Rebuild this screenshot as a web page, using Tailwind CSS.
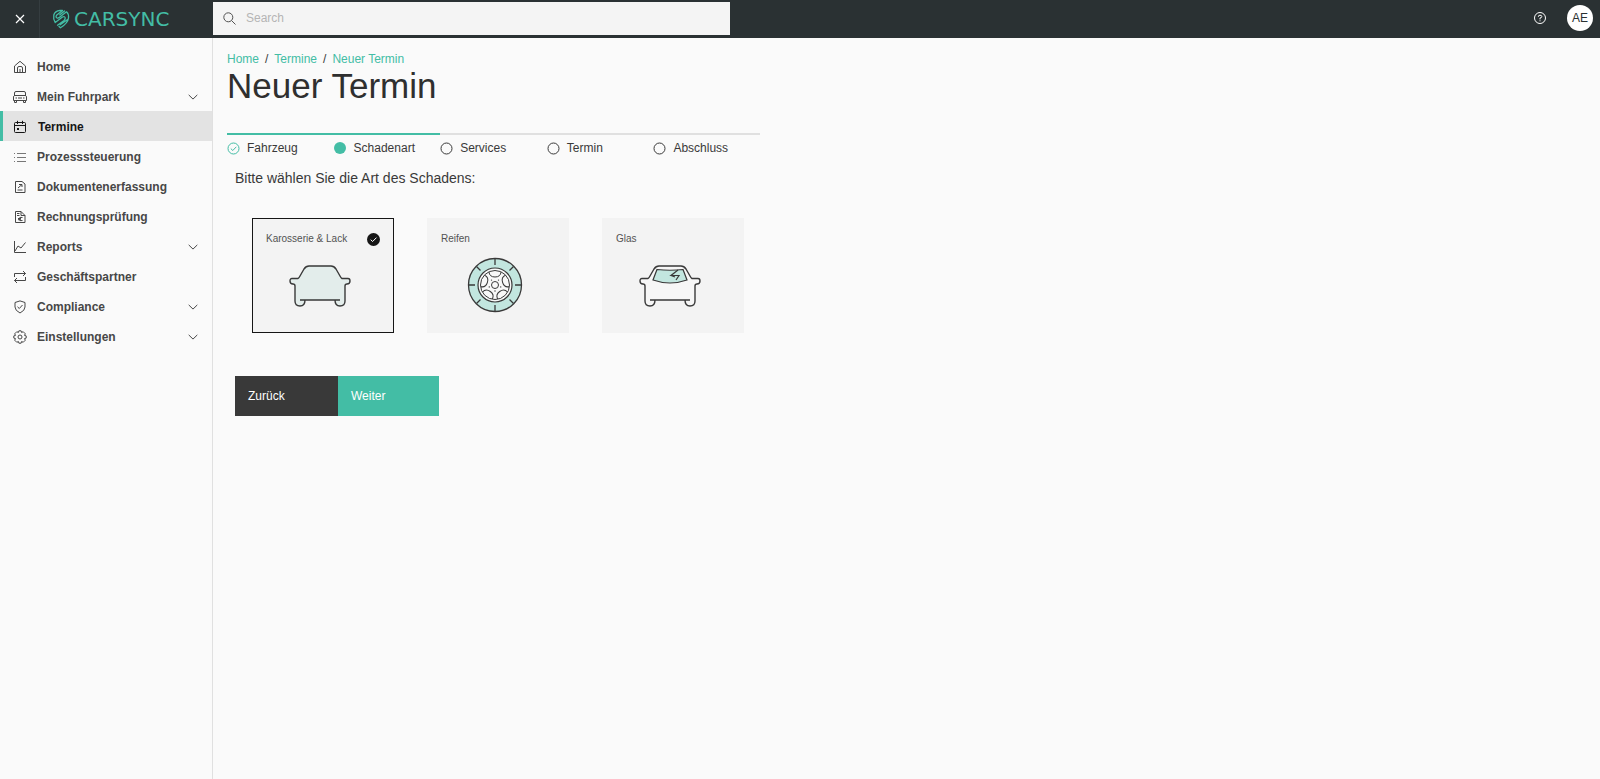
<!DOCTYPE html>
<html lang="de">
<head>
<meta charset="utf-8">
<title>Neuer Termin</title>
<script src="https://cdn.jsdelivr.net/npm/@tailwindcss/browser@4"></script>
</head>
<body class="min-h-screen flex flex-col bg-[#fafafa] font-['Liberation_Sans',Arial,sans-serif] text-xs text-[#393939]">
<svg class="hidden" aria-hidden="true">
  <symbol id="chevron" viewBox="0 0 10 6"><path d="M.7.9 5 5.1 9.300.9" fill="none" stroke="currentColor"/></symbol>
  <symbol id="car" viewBox="0 0 62 42">
    <path d="M9 14 15 4Q17 1 20 1H42Q45 1 47 4L53 14H58Q61 14 61 17Q61 19 58 19L56 20V37Q56 41 51 41Q46 41 46 36V35H16V36Q16 41 11 41Q6 41 6 37V20L4 19Q1 19 1 17Q1 14 4 14Z" stroke="none"/>
    <path d="M9 13.500Q10 13 11 11L15 4Q17 1 20 1H42Q45 1 47 4L51 11Q52 13 53 13.500H59Q61 13.500 61 16Q61 19 58 19Q56 19 56 21V36Q56 41 51 41Q46 41 46 35M9 13.500H3Q1 13.500 1 16Q1 19 4 19Q6 19 6 21V36Q6 41 11 41Q16 41 16 35M11 35H51" fill="none" stroke="#393939" stroke-width="1.400"/>
  </symbol>
</svg>
<header class="flex h-[38px] items-center bg-[#2a3133] text-white">
  <button type="button" aria-label="Menü schließen" class="flex h-full w-10 items-center justify-center border-r border-[#353d40]">
    <svg class="size-3" viewBox="0 0 12 12" fill="none" stroke="currentColor" stroke-width="1.200"><path d="M2 2l8 8M10 2l-8 8"/></svg>
  </button>
  <a href="#" class="flex w-[173px] items-center gap-1 pl-3 text-[#43bda5]">
    <svg class="h-[20px] w-[18px] shrink-0" viewBox="0 0 18 20" fill="none" stroke="currentColor" stroke-width="1.300" stroke-linecap="round" stroke-linejoin="round"><path d="M3.200 13.500Q1 10 1.800 6Q3 1.800 8 1.500L10.500 1.500L4.800 6Q3.200 8 5 9Q6 9.500 7.500 8.200L14.500 2.800Q17 5 16.500 9Q16 14 8.500 18.800L7 17.500M3.200 13.500L10.500 8Q13 7 13.200 9Q13.200 10.500 12 11.500L5.500 16.200M8.200 15.800L16 10.200M7.800 5.800L12.500 2"/></svg>
    <span class="font-['DejaVu_Sans',sans-serif] text-xl leading-5">CARSYNC</span>
  </a>
  <label class="flex h-[33px] w-[517px] items-center gap-[10px] bg-[#f4f4f4] pl-[10px] mb-[3px] mt-[1px]">
    <svg class="size-[13px] shrink-0 text-[#525252]" viewBox="0 0 13 13" fill="none" stroke="currentColor"><circle cx="5.300" cy="5.300" r="4.500"/><path d="M8.500 8.500l4 4"/></svg>
    <input type="search" placeholder="Search" aria-label="Search" class="h-full min-w-0 grow bg-transparent text-xs text-[#393939] outline-none placeholder:text-[#b5b5b5]">
  </label>
  <button type="button" aria-label="Hilfe" class="ml-auto mr-5 pb-[2px]">
    <svg class="size-[14px]" viewBox="0 0 14 14" fill="none" stroke="currentColor"><circle cx="7" cy="7" r="5.500"/><path d="M5.300 5.800Q5.300 4.200 7 4.200Q8.800 4.200 8.800 5.600Q8.800 6.800 7 7V8.400M7 9.300V10.300"/></svg>
  </button>
  <button type="button" class="mb-[2px] mr-[7px] size-[26px] rounded-full bg-white text-xs text-[#2a3133]">AE</button>
</header>
<div class="flex grow">
  <nav class="w-[213px] shrink-0 border-r border-[#e0e0e0] pt-[13px] font-bold text-[#474747]">
    <ul>
      <li><a href="#" class="flex h-[30px] items-center gap-[10px] pl-[13px] pt-px"><svg class="size-[14px]" viewBox="0 0 14 14" fill="none" stroke="currentColor"><path d="M1.500 6 7 1.300 12.500 6V12.500H1.500ZM4.500 12.500V8Q4.500 6.500 6 6.500H8Q9.500 6.500 9.500 8V12.500M7 9V12.500"/></svg>Home</a></li>
      <li><a href="#" class="flex h-[30px] items-center gap-[10px] pl-[13px] pr-[14px] pt-px"><svg class="size-[14px]" viewBox="0 0 14 14" fill="none" stroke="currentColor"><path d="M1.500 6V3Q1.500 1.500 3 1.500H11Q12.500 1.500 12.500 3V6M1.500 5.500H12.500Q13.500 6 13.500 7V10.500H.5V7Q.5 6 1.500 5.500ZM1.500 10.500V12.500H3.500V10.500M10.500 10.500V12.500H12.500V10.500M2.500 8H4M10 8H11.500M5 8H9"/></svg>Mein Fuhrpark<svg class="ml-auto h-[6px] w-[10px]"><use href="#chevron"/></svg></a></li>
      <li><a href="#" aria-current="page" class="flex h-[30px] items-center gap-[11px] border-l-3 border-[#43bda5] bg-[#e3e3e3] pl-[10px] pt-px text-[#161616]"><svg class="size-[14px]" viewBox="0 0 14 14" fill="none" stroke="currentColor"><path d="M2.500 2.500H11.500Q12.500 2.500 12.500 3.500V11.500Q12.500 12.500 11.500 12.500H2.500Q1.500 12.500 1.500 11.500V3.500Q1.500 2.500 2.500 2.500ZM1.500 5.500H12.500M4.500.8V4M9.500.8V4"/><path d="M4 8h2v2H4z" fill="currentColor" stroke="none"/></svg>Termine</a></li>
      <li><a href="#" class="flex h-[30px] items-center gap-[10px] pl-[13px] pt-px"><svg class="size-[14px] text-[#777]" viewBox="0 0 14 14" fill="none" stroke="currentColor"><path d="M4 3.500H13M4 7.500H13M4 11.500H13M1 3.500H2M1 7.500H2M1 11.500H2"/></svg>Prozesssteuerung</a></li>
      <li><a href="#" class="flex h-[30px] items-center gap-[10px] pl-[13px] pt-px"><svg class="size-[14px]" viewBox="0 0 14 14" fill="none" stroke="currentColor"><path d="M9 1.500H2.500V12.500H12V4ZM4.500 10H9.500M5 8 9 4.500M6 4.500H9V7"/></svg>Dokumentenerfassung</a></li>
      <li><a href="#" class="flex h-[30px] items-center gap-[10px] pl-[13px] pt-px"><svg class="size-[14px]" viewBox="0 0 14 14" fill="none" stroke="currentColor"><path d="M2.500 1.500H8L12 5.500V12.500H2.500ZM8 1.500V5.500H12M4 3.500H6.500M4 5.500H6.500M9.500 7.500Q6 6.500 6 9Q6 11.500 9.500 10.500M5 8.500H8M5 9.700H8"/></svg>Rechnungsprüfung</a></li>
      <li><a href="#" class="flex h-[30px] items-center gap-[10px] pl-[13px] pr-[14px] pt-px"><svg class="size-[14px]" viewBox="0 0 14 14" fill="none" stroke="currentColor"><path d="M1.500 1V12.500H13M2 11 5 6 8 8 12.500 2.500"/></svg>Reports<svg class="ml-auto h-[6px] w-[10px]"><use href="#chevron"/></svg></a></li>
      <li><a href="#" class="flex h-[30px] items-center gap-[10px] pl-[13px] pt-px"><svg class="size-[14px]" viewBox="0 0 14 14" fill="none" stroke="currentColor"><path d="M1.500 7V3.500H12.500M10 1 12.500 3.500 10 6M12.500 7V10.500H1.500M4 8 1.500 10.500 4 13"/></svg>Geschäftspartner</a></li>
      <li><a href="#" class="flex h-[30px] items-center gap-[10px] pl-[13px] pr-[14px] pt-px"><svg class="size-[14px]" viewBox="0 0 14 14" fill="none" stroke="currentColor"><path d="M7 .9 12 2.500V7Q12 10.500 7 13Q2 10.500 2 7V2.500ZM4.500 6.800 6.300 8.500 9.500 5"/></svg>Compliance<svg class="ml-auto h-[6px] w-[10px]"><use href="#chevron"/></svg></a></li>
      <li><a href="#" class="flex h-[30px] items-center gap-[10px] pl-[13px] pr-[14px] pt-px"><svg class="size-[14px]" viewBox="0 0 14 14" fill="none" stroke="currentColor" stroke-linejoin="round"><path d="M5.900.8H8.100L8.600 2.500 10.200 1.700 12.300 3.800 11.500 5.400 13.200 5.900V8.100L11.500 8.600 12.300 10.200 10.200 12.300 8.600 11.500 8.100 13.200H5.900L5.400 11.500 3.800 12.300 1.700 10.200 2.500 8.600.8 8.100V5.900L2.500 5.400 1.700 3.800 3.800 1.700 5.400 2.500Z"/><circle cx="7" cy="7" r="2"/></svg>Einstellungen<svg class="ml-auto h-[6px] w-[10px]"><use href="#chevron"/></svg></a></li>
    </ul>
  </nav>
  <main class="min-w-0 grow px-[14px] pt-[13px]">
    <nav aria-label="Brotkrumen" class="flex gap-[6px] leading-4"><a href="#" class="text-[#43bda5]">Home</a><span>/</span><a href="#" class="text-[#43bda5]">Termine</a><span>/</span><a href="#" class="text-[#43bda5]">Neuer Termin</a></nav>
    <h1 class="text-[35px] leading-[38px] text-[#2f2f2f]">Neuer Termin</h1>
    <ol class="mt-[28px] grid max-w-[533px] grid-cols-5 leading-4">
      <li class="flex items-center gap-[7px] border-t-2 border-[#43bda5] pt-[5px]"><svg class="size-[13px] text-[#43bda5]" viewBox="0 0 13 13" fill="none" stroke="currentColor"><circle cx="6.500" cy="6.500" r="5.500"/><path d="M3.800 6.600 5.800 8.500 9.300 4.800"/></svg>Fahrzeug</li>
      <li class="flex items-center gap-[7px] border-t-2 border-[#43bda5] pt-[5px]"><svg class="size-[13px] text-[#43bda5]" viewBox="0 0 13 13"><circle cx="6" cy="6" r="6" fill="currentColor"/></svg>Schadenart</li>
      <li class="flex items-center gap-[7px] border-t-2 border-[#e0e0e0] pt-[5px]"><svg class="size-[13px]" viewBox="0 0 13 13" fill="none" stroke="currentColor"><circle cx="6.500" cy="6.500" r="5.500"/></svg>Services</li>
      <li class="flex items-center gap-[7px] border-t-2 border-[#e0e0e0] pt-[5px]"><svg class="size-[13px]" viewBox="0 0 13 13" fill="none" stroke="currentColor"><circle cx="6.500" cy="6.500" r="5.500"/></svg>Termin</li>
      <li class="flex items-center gap-[7px] border-t-2 border-[#e0e0e0] pt-[5px]"><svg class="size-[13px]" viewBox="0 0 13 13" fill="none" stroke="currentColor"><circle cx="6.500" cy="6.500" r="5.500"/></svg>Abschluss</li>
    </ol>
    <form class="px-2 pt-3">
      <fieldset>
        <legend class="text-sm leading-5">Bitte wählen Sie die Art des Schadens:</legend>
        <div class="flex flex-wrap gap-[33px] px-[17px] pt-[30px] text-[10px] leading-4 text-[#525252]">
          <label class="flex h-[115px] w-[142px] flex-col border border-transparent bg-[#f3f3f3] px-[13px] pt-3 has-checked:border-[#161616]">
            <input type="radio" name="art" class="peer sr-only" checked>
            <span class="flex items-center justify-between">Karosserie &amp; Lack<svg class="size-[13px]" viewBox="0 0 13 13"><circle cx="6.500" cy="6.500" r="6.500" fill="#161616"/><path d="M3.700 6.700 5.600 8.500 9.500 4.600" fill="none" stroke="#fff"/></svg></span>
            <svg class="mt-[18px] h-[42px] w-[62px] self-center pr-[6px] box-content" viewBox="0 0 62 42"><use href="#car" fill="#e3edeb"/></svg>
          </label>
          <label class="flex h-[115px] w-[142px] flex-col border border-transparent bg-[#f3f3f3] px-[13px] pt-3 has-checked:border-[#161616]">
            <input type="radio" name="art" class="peer sr-only">
            <span>Reifen</span>
            <svg class="mt-[10px] size-[56px] self-center pr-[6px] box-content" viewBox="-28 -28 56 56" fill="none" stroke="#393939">
              <circle r="26.500" fill="#c2e6df" stroke-width="1.300"/>
              <path stroke-width="1.300" d="M0-27V-20M0 20V27M-27 0H-20M20 0H27M-18.500-18.500-14.500-14.500M18.500-18.500 14.500-14.500M-18.500 18.500-14.500 14.500M18.500 18.500 14.500 14.500"/>
              <circle r="17" fill="#f8f8f8" stroke-width="1.200"/><circle r="14.500"/><circle r="3.500"/>
              <path id="hole" d="M-6-13Q-5.500-8 0-8Q5.500-8 6-13"/><use href="#hole" transform="rotate(72)"/><use href="#hole" transform="rotate(144)"/><use href="#hole" transform="rotate(216)"/><use href="#hole" transform="rotate(288)"/>
              <g fill="#393939" stroke="none"><circle cy="6" r=".7"/><circle cx="5.700" cy="1.900" r=".7"/><circle cx="-5.700" cy="1.900" r=".7"/><circle cx="3.500" cy="-4.900" r=".7"/><circle cx="-3.500" cy="-4.900" r=".7"/></g>
            </svg>
          </label>
          <label class="flex h-[115px] w-[142px] flex-col border border-transparent bg-[#f3f3f3] px-[13px] pt-3 has-checked:border-[#161616]">
            <input type="radio" name="art" class="peer sr-only">
            <span>Glas</span>
            <svg class="mt-[18px] h-[42px] w-[62px] self-center pr-[6px] box-content" viewBox="0 0 62 42"><use href="#car" fill="#f6f6f6"/><path d="M18 4.500Q31 6 44 4.500L48 15Q31 21 14 15Z" fill="#c2e6df" stroke="#393939" stroke-width="1.200"/><path d="M39 5 32 10.500 40 10.500 37 15M32 10.500 36 12" fill="none" stroke="#393939" stroke-width="1.200"/></svg>
          </label>
        </div>
      </fieldset>
      <div class="mt-[43px] flex text-xs text-white"><button type="button" class="h-10 w-[103px] bg-[#393939] pl-[13px] text-left">Zurück</button><button type="submit" class="h-10 w-[101px] bg-[#43bda5] pl-[13px] text-left">Weiter</button></div>
    </form>
  </main>
</div>
</body>
</html>
